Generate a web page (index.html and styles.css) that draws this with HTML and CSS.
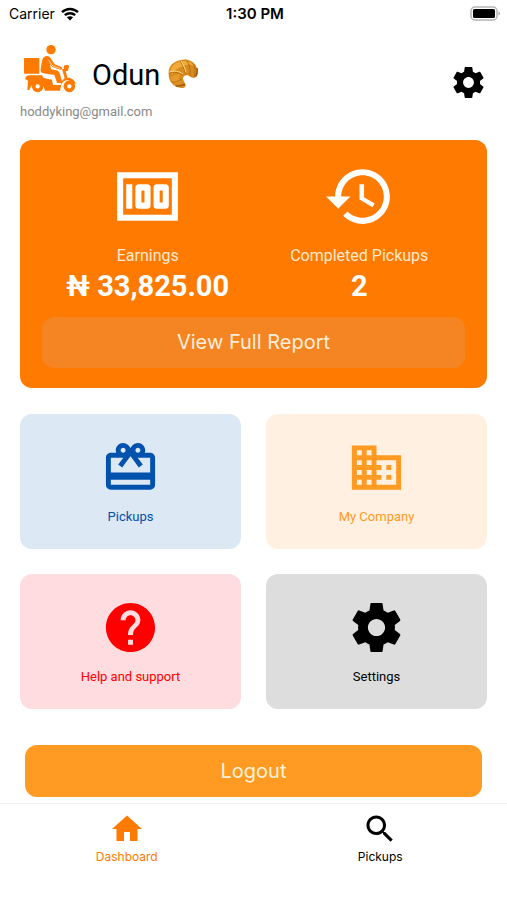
FILE: index.html
```html
<!DOCTYPE html>
<html lang="en">
<head>
    <meta charset="UTF-8">
    <meta name="viewport" content="width=device-width, initial-scale=1.0">
    <title>Dashboard</title>
    <link rel="stylesheet" href="styles.css">
</head>
<body>
    <div class="status-bar">
        <div class="carrier">
            <span>Carrier</span>
            <svg width="18" height="14" viewBox="0 0 18 14" aria-hidden="true">
                <g fill="none" stroke="#000" stroke-width="2.4">
                    <path d="M1 5.2C5.6.9 12.4.9 17 5.2"/>
                    <path d="M3.8 8.2c3-2.7 7.4-2.7 10.4 0"/>
                </g>
                <path d="M9 13.4L5.9 10.3c1.8-1.5 4.4-1.5 6.2 0z"/>
            </svg>
        </div>
        <div class="time">1:30 PM</div>
        <div class="battery">
            <svg width="31" height="16" viewBox="0 0 31 16" aria-hidden="true">
                <rect x="1" y="1" width="26" height="13" rx="4" fill="#fff" stroke="#b5b5b5" stroke-width="1.5"/>
                <rect x="3" y="3" width="22" height="9" rx="1.5"/>
                <path d="M28.5 5.5c2.2 1 2.2 3 0 4z" fill="#a5a5a5"/>
            </svg>
        </div>
    </div>

    <main class="page">
        <header class="header">
            <div class="profile">
                <div class="name-row">
                    <svg class="logo" viewBox="61 129 168 153" aria-hidden="true">
                        <g fill="#ff7a00">
                            <circle cx="154" cy="149" r="14"/>
                            <rect x="73" y="174" width="46" height="47" rx="2"/>
                            <path d="M127 182c3-16 20-19 27-6l11 17 19 7c6 3 4 9-2 9l-24-8-7-8 3 15 16 3c7 2 9 6 11 11l7 27h-16l-8-24-33-5c-7-2-9-6-8-13z"/>
                            <path d="M90 226h37c2 8 7 9 14 10l16 3 3 16h23c1-9 5-16 12-20l-8-28h8l2-9c4-4 9-4 11 0l-3 14-7 1 5 20c14 0 23 8 25 19l-7-1c-7-15-33-15-37 6l-3 15h-46c1-27-39-30-46-2h-6l2-28-8-4c0-6 4-12 11-12z"/>
                        </g>
                        <path d="M147 180l11 17 24 9M131 224l33 7 8 24" fill="none" stroke="#fff" stroke-width="2"/>
                        <circle cx="199" cy="202" r="7" fill="#ff7a00"/>
                        <g fill="#fff" stroke="#ff7a00" stroke-width="11">
                            <circle cx="114" cy="259" r="12"/>
                            <circle cx="209" cy="259" r="12"/>
                        </g>
                    </svg>
                    <h1>Odun</h1>
                    <svg class="croissant" viewBox="0 0 90 90" aria-label="croissant">
                        <path d="M2 46C0 22 15 8 37 4c18-6 38 1 47 17 8 14 7 28-1 34-7 4-15-1-21-5-10-4-18 2-17 10 2 9 9 13 8 20-1 7-12 9-23 5C11 79 2 64 2 46z" fill="#d98a1c"/>
                        <path d="M5 40C9 22 20 11 35 8c19-6 37 1 44 14-13-8-25-6-34 1-15 2-26 10-31 23z" fill="#f0ab38"/>
                        <path d="M8 57c7-10 19-14 31-11-8 7-9 16-1 23-7 5-16 4-24 3z" fill="#e59a2c"/>
                        <path d="M36 5c5 10 13 21 16 40M3 43c12-5 28-4 42 6M56 5c8 10 12 25 10 45M12 69c10 2 19-2 29-9M76 14c6 10 6 25 3 41" fill="none" stroke="#b86c16" stroke-width="3"/>
                        <path d="M39 6c5 9 12 19 15 34M4 39c14-5 29-3 41 6" fill="none" stroke="#ffdc88" stroke-width="3"/>
                        <path d="M23 81c9 1 18-1 28-5M83 52c4-7 6-15 4-25" fill="none" stroke="#985010" stroke-width="4"/>
                    </svg>
                </div>
                <p class="email">hoddyking@gmail.com</p>
            </div>
            <button class="gear" aria-label="Settings">
                <svg viewBox="0 0 24 24"><use href="#icon-settings"/></svg>
            </button>
        </header>

        <section class="report">
            <div class="stats">
                <div class="stat">
                    <svg viewBox="0 0 24 24" aria-hidden="true"><path d="M15 16h3c.55 0 1-.45 1-1V9c0-.55-.45-1-1-1h-3c-.55 0-1 .45-1 1v6c0 .55.45 1 1 1zm1-6h1v4h-1v-4zm-7 6h3c.55 0 1-.45 1-1V9c0-.55-.45-1-1-1H9c-.55 0-1 .45-1 1v6c0 .55.45 1 1 1zm1-6h1v4h-1v-4zM5 8h2v8H5zM2 4v16h20V4H2zm18 14H4V6h16v12z"/></svg>
                    <span class="stat-label">Earnings</span>
                    <strong>₦ 33,825.00</strong>
                </div>
                <div class="stat">
                    <svg viewBox="0 0 24 24" aria-hidden="true"><path d="M13 3c-4.97 0-9 4.03-9 9H1l3.89 3.89.07.14L9 12H6c0-3.87 3.13-7 7-7s7 3.13 7 7-3.13 7-7 7c-1.93 0-3.68-.79-4.94-2.06l-1.42 1.42C8.27 19.99 10.51 21 13 21c4.97 0 9-4.03 9-9s-4.03-9-9-9zm-1 5v5l4.28 2.54.72-1.21-3.5-2.08V8H12z"/></svg>
                    <span class="stat-label">Completed Pickups</span>
                    <strong>2</strong>
                </div>
            </div>
            <button class="btn report-btn">View Full Report</button>
        </section>

        <nav class="tiles">
            <a class="tile pickups" href="#">
                <svg viewBox="0 0 24 24" aria-hidden="true"><path d="M20 6h-2.18c.11-.31.18-.65.18-1 0-1.66-1.34-3-3-3-1.05 0-1.96.54-2.5 1.35l-.5.67-.5-.68C10.96 2.54 10.05 2 9 2 7.34 2 6 3.34 6 5c0 .35.07.69.18 1H4c-1.11 0-1.99.89-1.99 2L2 19c0 1.11.89 2 2 2h16c1.11 0 2-.89 2-2V8c0-1.11-.89-2-2-2zm-5-2c.55 0 1 .45 1 1s-.45 1-1 1-1-.45-1-1 .45-1 1-1zM9 4c.55 0 1 .45 1 1s-.45 1-1 1-1-.45-1-1 .45-1 1-1zm11 15H4v-2h16v2zm0-5H4V8h5.08L7 10.83 8.62 12 11 8.76l1-1.36 1 1.36L15.38 12 17 10.83 14.92 8H20v6z"/></svg>
                <span>Pickups</span>
            </a>
            <a class="tile company" href="#">
                <svg viewBox="0 0 24 24" aria-hidden="true"><path d="M12 7V3H2v18h20V7H12zM6 19H4v-2h2v2zm0-4H4v-2h2v2zm0-4H4V9h2v2zm0-4H4V5h2v2zm4 12H8v-2h2v2zm0-4H8v-2h2v2zm0-4H8V9h2v2zm0-4H8V5h2v2zm10 12h-8v-2h2v-2h-2v-2h2v-2h-2V9h8v10zm-2-8h-2v2h2v-2zm0 4h-2v2h2v-2z"/></svg>
                <span>My Company</span>
            </a>
            <a class="tile help" href="#">
                <svg viewBox="0 0 24 24" aria-hidden="true"><path d="M12 2C6.48 2 2 6.48 2 12s4.48 10 10 10 10-4.48 10-10S17.52 2 12 2zm1 17h-2v-2h2v2zm2.07-7.75l-.9.92C13.45 12.9 13 13.5 13 15h-2v-.5c0-1.1.45-2.1 1.17-2.83l1.24-1.26c.37-.36.59-.86.59-1.41 0-1.1-.9-2-2-2s-2 .9-2 2H8c0-2.21 1.79-4 4-4s4 1.79 4 4c0 .88-.36 1.68-.93 2.25z"/></svg>
                <span>Help and support</span>
            </a>
            <a class="tile settings" href="#">
                <svg viewBox="0 0 24 24" aria-hidden="true"><path id="icon-settings" d="M19.43 12.98c.04-.32.07-.64.07-.98s-.03-.66-.07-.98l2.11-1.65c.19-.15.24-.42.12-.64l-2-3.46c-.12-.22-.39-.3-.61-.22l-2.49 1c-.52-.4-1.08-.73-1.69-.98l-.38-2.65C14.46 2.18 14.25 2 14 2h-4c-.25 0-.46.18-.49.42l-.38 2.65c-.61.25-1.17.59-1.69.98l-2.49-1c-.23-.09-.49 0-.61.22l-2 3.46c-.13.22-.07.49.12.64l2.11 1.65c-.04.32-.07.65-.07.98s.03.66.07.98l-2.11 1.65c-.19.15-.24.42-.12.64l2 3.46c.12.22.39.3.61.22l2.49-1c.52.4 1.08.73 1.69.98l.38 2.65c.03.24.24.42.49.42h4c.25 0 .46-.18.49-.42l.38-2.65c.61-.25 1.17-.59 1.69-.98l2.49 1c.23.09.49 0 .61-.22l2-3.46c.12-.22.07-.49-.12-.64l-2.11-1.65zM12 15.5c-1.93 0-3.5-1.57-3.5-3.5s1.57-3.5 3.5-3.5 3.5 1.57 3.5 3.5-1.57 3.5-3.5 3.5z"/></svg>
                <span>Settings</span>
            </a>
        </nav>

        <button class="btn logout-btn">Logout</button>
    </main>

    <nav class="tab-bar">
        <a class="tab active" href="#">
            <svg viewBox="0 0 24 24" aria-hidden="true"><path d="M10 20v-6h4v6h5v-8h3L12 3 2 12h3v8z"/></svg>
            <span>Dashboard</span>
        </a>
        <a class="tab" href="#">
            <svg viewBox="0 0 24 24" aria-hidden="true"><path d="M15.5 14h-.79l-.28-.27C15.41 12.59 16 11.11 16 9.5 16 5.91 13.09 3 9.5 3S3 5.91 3 9.5 5.91 16 9.5 16c1.61 0 3.09-.59 4.23-1.57l.27.28v.79l5 4.99L20.49 19l-4.99-5zm-6 0C7.01 14 5 11.99 5 9.5S7.01 5 9.5 5 14 7.01 14 9.5 11.99 14 9.5 14z"/></svg>
            <span>Pickups</span>
        </a>
    </nav>
</body>
</html>
```

FILE: styles.css
```css
* {
    box-sizing: border-box;
}
body {
    margin: 0;
    min-height: 100vh;
    display: flex;
    flex-direction: column;
    background-color: #fff;
    color: #000;
    font-family: Roboto, sans-serif;
}
svg {
    display: block;
    fill: currentColor;
}
a {
    color: inherit;
    text-decoration: none;
}
button {
    border: none;
    cursor: pointer;
}
.status-bar {
    display: grid;
    grid-template-columns: 1fr auto 1fr;
    align-items: center;
    height: 27px;
    padding: 0 6px 0 9px;
    font-family: Inter, sans-serif;
    font-size: 14px;
}
.carrier {
    display: flex;
    align-items: center;
    gap: 6px;
}
.time {
    font-size: 15px;
    font-weight: 600;
}
.battery {
    justify-self: end;
}
.page {
    padding: 16px 20px 6px;
}
.header {
    display: flex;
    justify-content: space-between;
    align-items: center;
    margin-bottom: 18px;
}
.name-row {
    display: flex;
    align-items: center;
}
.logo {
    width: 56px;
    height: 51px;
    margin-right: 16px;
}
.header h1 {
    margin: 12px 8px 0 0;
    font-size: 29px;
    font-weight: 400;
    line-height: 36px;
}
.croissant {
    width: 30px;
    height: 30px;
    margin-top: 10px;
}
.email {
    margin: 8px 0 0;
    color: #888;
    font-size: 13px;
    line-height: 20px;
}
.gear {
    padding: 0;
    background: none;
    color: #000;
}
.gear svg {
    width: 37px;
    height: 37px;
}
.report {
    padding: 20px 22px;
    border-radius: 12px;
    background-color: #ff7a00;
    color: #fff;
}
.stats {
    display: grid;
    grid-template-columns: 1fr 1fr;
    margin-bottom: 11px;
}
.stat {
    display: flex;
    flex-direction: column;
    align-items: center;
}
.stat svg {
    width: 73px;
    height: 73px;
}
.stat-label {
    margin-top: 13px;
    color: #ffe9cf;
    font-size: 16px;
    line-height: 20px;
}
.stat strong {
    font-size: 29px;
    font-weight: 700;
    line-height: 40px;
}
.btn {
    display: block;
    width: 100%;
    padding: 12px;
    border-radius: 12px;
    font-family: Inter, sans-serif;
    font-size: 20px;
    line-height: 28px;
}
.report-btn {
    padding: 11px 12px 12px;
    background-color: #f58422;
    color: #ffeedb;
}
.tiles {
    display: grid;
    grid-template-columns: 1fr 1fr;
    gap: 25px;
    margin: 26px 0 36px;
}
.tile {
    display: flex;
    flex-direction: column;
    align-items: center;
    gap: 10px;
    padding: 24px 8px 22px;
    border-radius: 12px;
    font-size: 13px;
    line-height: 20px;
}
.tile svg {
    width: 59px;
    height: 59px;
}
.pickups {
    background-color: #dde8f5;
    color: #0052ad;
}
.company {
    background-color: #fff0e2;
    color: #ff9a22;
}
.help {
    background-color: #ffdcdf;
    color: #f00;
}
.settings {
    background-color: #ddd;
}
.logout-btn {
    width: auto;
    min-width: calc(100% - 10px);
    margin: 0 auto;
    background-color: #ff9a22;
    color: #fff3dc;
}
.tab-bar {
    display: grid;
    grid-template-columns: 1fr 1fr;
    flex-grow: 1;
    padding-top: 7px;
    border-top: 1px solid #f0f0f0;
    font-family: Inter, sans-serif;
    font-size: 12px;
    line-height: 20px;
}
.tab {
    display: flex;
    flex-direction: column;
    align-items: center;
}
.tab svg {
    width: 36px;
    height: 36px;
}
.active {
    color: #ff7a00;
}
```
